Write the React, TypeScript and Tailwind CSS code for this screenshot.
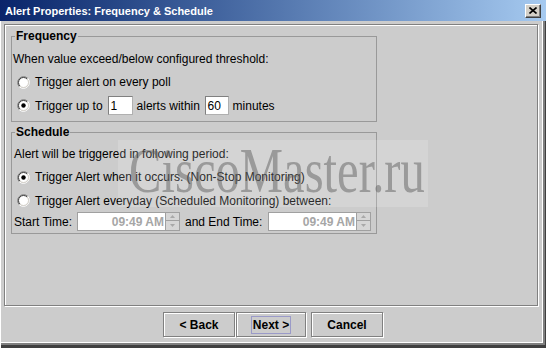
import React from 'react'

// Small Windows-classic style radio (sunken ring)
function Radio({ checked = false }: { checked?: boolean }) {
  return (
    <svg width="13" height="13" viewBox="0 0 13 13" className="shrink-0">
      <circle cx="6.5" cy="6.5" r="5" fill="#ffffff" />
      <path d="M2.26 10.74 A6 6 0 0 1 10.74 2.26" stroke="#808080" strokeWidth="1" fill="none" />
      <path d="M10.74 2.26 A6 6 0 0 1 2.26 10.74" stroke="#ffffff" strokeWidth="1" fill="none" />
      <path d="M2.96 10.04 A5 5 0 0 1 10.04 2.96" stroke="#404040" strokeWidth="1" fill="none" />
      <path d="M10.04 2.96 A5 5 0 0 1 2.96 10.04" stroke="#d4d0c8" strokeWidth="1" fill="none" />
      {checked && <circle cx="6.5" cy="6.5" r="2.2" fill="#000000" />}
    </svg>
  )
}

function SmallField({ value, w }: { value: string; w: string }) {
  return (
    <div className={`${w} h-[19px] shrink-0 border border-[#808080] border-r-[#b0b0b0] border-b-[#b0b0b0] bg-white flex items-center pl-[2px]`}>
      {value}
    </div>
  )
}

function TimeSpinner() {
  return (
    <div className="flex h-[19px] shrink-0">
      <div className="w-[89px] h-full border border-[#a0a0a0] bg-white flex items-center justify-end pr-[1px] font-bold text-[#a6a6a6]">
        09:49 AM
      </div>
      <div className="w-[14px] h-full flex flex-col">
        <div className="h-[9px] border border-l-0 border-[#a0a0a0] bg-[#d6d6d6] flex items-center justify-center">
          <svg width="5" height="3" viewBox="0 0 5 3">
            <path d="M0 3 L2.5 0 L5 3 Z" fill="#a8a8a8" />
          </svg>
        </div>
        <div className="h-[10px] border border-l-0 border-t-0 border-[#a0a0a0] bg-[#d6d6d6] flex items-center justify-center">
          <svg width="5" height="3" viewBox="0 0 5 3">
            <path d="M0 0 L2.5 3 L5 0 Z" fill="#a8a8a8" />
          </svg>
        </div>
      </div>
    </div>
  )
}

const etched = 'border border-[#808080] shadow-[inset_1px_1px_0_#ffffff,1px_1px_0_#ffffff]'

export default function App() {
  return (
    <div className="relative w-[546px] h-[348px] overflow-hidden bg-[#cccccc] text-[12px] leading-[14px] text-black font-['Liberation_Sans',Arial,sans-serif] shadow-[inset_1px_0_0_#ffffff,inset_-1px_-3px_0_#404040,inset_-3px_-5px_0_#808080,inset_-4px_-6px_0_#ffffff]">
      {/* Title bar */}
      <div className="h-[21px] flex items-center justify-between pl-[5px] pr-[5px] bg-linear-to-r from-[#0a246a] to-[#a6caf0]">
        <span className="text-white font-bold text-[11px]">Alert Properties: Frequency &amp; Schedule</span>
        <div className="w-[16px] h-[14px] bg-[#d4d0c8] border border-t-white border-l-white border-r-[#404040] border-b-[#404040] shadow-[inset_-1px_-1px_0_#808080] flex items-center justify-center">
          <svg width="8" height="7" viewBox="0 0 8 7">
            <path d="M0.5 0.5 L7.5 6.5 M7.5 0.5 L0.5 6.5" stroke="#000" strokeWidth="1.6" />
          </svg>
        </div>
      </div>

      {/* Content panel */}
      <div className={`ml-[4px] mt-[3px] w-[534px] h-[282px] px-[6px] pt-[4px] ${etched}`}>
        <fieldset className="w-[366px] border border-[#999999]">
          <legend className="ml-[3px] px-[1px] font-bold leading-[14px]">Frequency</legend>
          <div className="pt-[5px] pb-[4px]">
            <div className="h-[22px] flex items-center pl-[1px]">When value exceed/below configured threshold:</div>
            <div className="h-[24px] flex items-center pl-[5px] gap-[5px]">
              <Radio />
              <span>Trigger alert on every poll</span>
            </div>
            <div className="h-[23px] flex items-center pl-[5px]">
              <Radio checked />
              <span className="ml-[5px]">Trigger up to</span>
              <div className="ml-[5px]">
                <SmallField value="1" w="w-[25px]" />
              </div>
              <span className="ml-[4px] w-[68px]">alerts within</span>
              <SmallField value="60" w="w-[24px]" />
              <span className="ml-[4px]">minutes</span>
            </div>
          </div>
        </fieldset>

        <fieldset className="mt-[3px] w-[366px] border border-[#999999]">
          <legend className="ml-[3px] px-[1px] font-bold leading-[14px]">Schedule</legend>
          <div className="pt-[3px] pb-[1px]">
            <div className="h-[23px] flex items-center pl-[2px]">Alert will be triggered in following period:</div>
            <div className="h-[24px] flex items-center pl-[5px] gap-[5px]">
              <Radio checked />
              <span>Trigger Alert when it occurs. (Non-Stop Monitoring)</span>
            </div>
            <div className="h-[23px] flex items-center pl-[5px] gap-[5px]">
              <Radio />
              <span>Trigger Alert everyday (Scheduled Monitoring) between:</span>
            </div>
            <div className="h-[20px] flex items-start pl-[2px]">
              <span className="w-[63px] h-[19px] flex items-center">Start Time:</span>
              <TimeSpinner />
              <span className="ml-[5px] w-[83px] h-[19px] flex items-center">and End Time:</span>
              <TimeSpinner />
            </div>
          </div>
        </fieldset>
      </div>

      {/* Buttons */}
      <div className="mt-[6px] flex justify-center font-bold">
        <button type="button" className={`w-[72px] h-[25px] ${etched}`}>&lt; Back</button>
        <button type="button" className={`ml-[1px] w-[70px] h-[25px] flex items-center justify-center ${etched}`}>
          <span className="border border-[#9a9ac8] px-[1px] leading-[16px]">Next &gt;</span>
        </button>
        <button type="button" className={`ml-[5px] w-[72px] h-[25px] ${etched}`}>Cancel</button>
      </div>

      {/* Watermark */}
      <div className="absolute left-[118px] top-[140px] w-[310px] h-[67px] bg-[rgba(255,255,255,0.16)] pointer-events-none">
        <span className="absolute left-[11px] top-[-1px] origin-left scale-x-[0.76] whitespace-nowrap font-['Liberation_Serif','Times_New_Roman',serif] text-[64px] leading-[63px] text-[rgba(96,96,96,0.5)]">
          CiscoMaster.ru
        </span>
      </div>
    </div>
  )
}
